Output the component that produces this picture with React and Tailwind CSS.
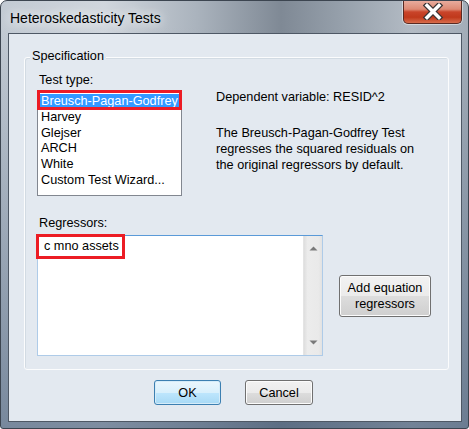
const testTypes = [
    "Breusch-Pagan-Godfrey",
    "Harvey",
    "Glejser",
    "ARCH",
    "White",
    "Custom Test Wizard...",
];

const ScrollArrow = ({ up }) => (
    <svg width="9" height="5" viewBox="0 0 9 5">
        {up ? (
            <polygon points="0.5,4.5 4.5,0.5 8.5,4.5" fill="#7a7a7a" />
        ) : (
            <polygon points="0.5,0.5 8.5,0.5 4.5,4.5" fill="#7a7a7a" />
        )}
    </svg>
);

const CloseButton = () => (
    <div className="-mt-[1px] ml-auto mr-[6px] w-[59px] h-[24px] rounded-b-[5px] border border-t-0 border-[#5a2a22] shadow-[0_0_0_1px_rgba(255,255,255,0.45)] bg-[linear-gradient(180deg,#eab0a2_0%,#de8a74_40%,#c9442a_52%,#c0391c_75%,#d86d4c_100%)] flex items-center justify-center">
        <svg width="22" height="17" viewBox="0 0 22 17">
            <path d="M5 2.5 L17 14.5 M17 2.5 L5 14.5" stroke="#3b3434" strokeWidth="6" strokeLinecap="square" />
            <path d="M5 2.5 L17 14.5 M17 2.5 L5 14.5" stroke="#ffffff" strokeWidth="3.5" strokeLinecap="square" />
        </svg>
    </div>
);

export default function App() {
    return (
        <div className="w-[469px] h-[429px] bg-white font-['Liberation_Sans',Arial,sans-serif] text-black">
            <div className="w-[469px] h-[429px] rounded-t-[7px] rounded-b-[3px] border border-[#3c4550] bg-[linear-gradient(180deg,rgba(255,255,255,0)_6%,rgba(70,92,120,0.6)_100%),linear-gradient(90deg,#c2cad3_0%,#d0d6dd_22%,#aab3bd_42%,#7f8995_60%,#98a2ad_74%,#b3bbc4_88%,#a3adb8_100%)] flex flex-col overflow-hidden">
                {/* title bar */}
                <div className="h-[32px] flex items-start shrink-0">
                    <span className="pl-[9px] pt-[9px] text-[14px] leading-[16px] [text-shadow:0_0_8px_#eef2f6,0_0_14px_#eef2f6]">
                        Heteroskedasticity Tests
                    </span>
                    <CloseButton />
                </div>

                {/* client area */}
                <div className="ml-[7px] mr-[6px] h-[389px] border border-[#4e5865] bg-[#e3e9f0] flex flex-col text-[12.7px] leading-[16px]">
                    <div className="relative ml-[15px] mt-[23px] w-[425px] h-[313px] rounded-[3px] border border-[#fbfcfd] shadow-[inset_1px_1px_0_#d2dbe3]">
                        <span className="absolute left-[5px] -top-[10px] px-[2px] bg-[#e3e9f0]">
                            Specification
                        </span>

                        <div className="flex pl-[12px] pt-[14px]">
                            <div className="w-[145px]">
                                <div className="pl-[2px] h-[16px]">Test type:</div>
                                <div className="relative mt-[2px] h-[106px] border border-[#828790] bg-white pt-[3px]">
                                    {testTypes.map((t, i) => (
                                        <div
                                            key={t}
                                            className={
                                                i === 0
                                                    ? "h-[15.8px] leading-[15.8px] pl-[3px] bg-[#3399ff] text-white"
                                                    : "h-[15.8px] leading-[15.8px] pl-[3px]"
                                            }
                                        >
                                            {t}
                                        </div>
                                    ))}
                                    <div className="absolute -left-[1px] -top-[1px] w-[145px] h-[20px] border-[3px] border-[#ec1c24]" />
                                </div>
                            </div>
                            <div className="ml-[34px] pt-[17px]">
                                <div>Dependent variable: RESID^2</div>
                                <div className="mt-[20px]">
                                    The Breusch-Pagan-Godfrey Test
                                    <br />
                                    regresses the squared residuals on
                                    <br />
                                    the original regressors by default.
                                </div>
                            </div>
                        </div>

                        <div className="pl-[12px] mt-[19px]">
                            <div className="pl-[2px] h-[16px]">Regressors:</div>
                            <div className="mt-[4px] flex items-center">
                                <div className="relative w-[286px] h-[121px] border border-[#aecbe8] border-t-[#5a9ad8] bg-white flex">
                                    <div className="flex-1 pl-[6px] pt-[2px]">c mno assets</div>
                                    <div className="w-[19px] bg-[linear-gradient(90deg,#dedede_0%,#ececec_20%,#eaeaea_80%,#e2e2e2_100%)] border-l border-[#e4e4e4] flex flex-col items-center justify-between pt-[10px] pb-[10px]">
                                        <ScrollArrow up />
                                        <ScrollArrow />
                                    </div>
                                    <div className="absolute -left-[2px] -top-[2px] w-[89px] h-[25px] border-[3px] border-[#ec1c24]" />
                                </div>
                                <button className="ml-[16px] w-[92px] h-[42px] rounded-[3px] border border-[#707070] bg-[linear-gradient(180deg,#f2f2f2_0%,#ebebeb_50%,#dddddd_51%,#cfcfcf_100%)] shadow-[inset_0_0_0_1px_#fcfcfc] leading-[16px] text-center">
                                    Add equation
                                    <br />
                                    regressors
                                </button>
                            </div>
                        </div>
                    </div>

                    <div className="flex mt-[10px] ml-[145px]">
                        <button className="w-[67px] h-[25px] rounded-[3px] border border-[#3c7fb1] bg-[linear-gradient(180deg,#eaf6fd_0%,#d9f0fc_50%,#bee6fd_51%,#a7d9f5_100%)] shadow-[inset_0_0_0_1px_#d5ecf9]">
                            OK
                        </button>
                        <button className="ml-[24px] w-[68px] h-[25px] rounded-[3px] border border-[#707070] bg-[linear-gradient(180deg,#f2f2f2_0%,#ebebeb_50%,#dddddd_51%,#cfcfcf_100%)] shadow-[inset_0_0_0_1px_#fcfcfc]">
                            Cancel
                        </button>
                    </div>
                </div>
            </div>
        </div>
    );
}
